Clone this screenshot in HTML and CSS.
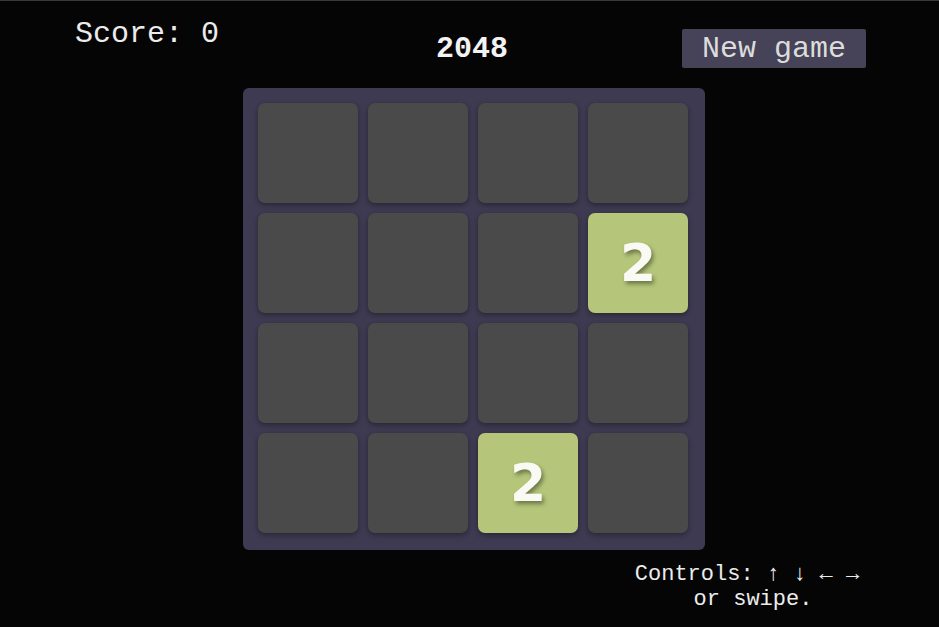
FILE: index.html
```html
<!DOCTYPE html>
<html lang="en">
<head>
<meta charset="utf-8">
<title>2048</title>
<link rel="stylesheet" href="styles.css">
</head>
<body>
<div class="page">
  <header class="header">
    <div class="score">Score: 0</div>
    <h1 class="title">2048</h1>
    <button class="new-game">New game</button>
  </header>
  <main class="board">
    <div class="cell"></div>
    <div class="cell"></div>
    <div class="cell"></div>
    <div class="cell"></div>
    <div class="cell"></div>
    <div class="cell"></div>
    <div class="cell"></div>
    <div class="cell tile-2">2</div>
    <div class="cell"></div>
    <div class="cell"></div>
    <div class="cell"></div>
    <div class="cell"></div>
    <div class="cell"></div>
    <div class="cell"></div>
    <div class="cell tile-2">2</div>
    <div class="cell"></div>
  </main>
  <footer class="controls">Controls: ↑ ↓ ← →<br><span class="swipe">or swipe.</span></footer>
</div>
</body>
</html>
```
FILE: styles.css
```css
html, body {
  margin: 0;
  padding: 0;
  background: #050505;
}
body {
  border-top: 1px solid #3a3a3a;
  height: 626px;
  overflow: hidden;
  font-family: "Courier New", "Nimbus Mono PS", "FreeMono", "Liberation Mono", monospace;
  color: #ececec;
}
.header {
  display: grid;
  grid-template-columns: 1fr auto 1fr;
  align-items: start;
  height: 87px;
  padding: 0 73px 0 75px;
  box-sizing: border-box;
}
.score {
  justify-self: start;
  margin-top: 16px;
  font-size: 30px;
  line-height: 34px;
  color: #ececec;
}
.title {
  margin: 31px 0 0 3px;
  font-size: 30px;
  line-height: 34px;
  font-weight: bold;
  color: #f2f2f2;
}
.new-game {
  justify-self: end;
  margin-top: 28px;
  padding: 3px 20px 2px;
  border: none;
  border-radius: 2px;
  background: #464257;
  color: #dcdcdc;
  font-family: "Courier New", "Nimbus Mono PS", "FreeMono", "Liberation Mono", monospace;
  font-size: 30px;
  line-height: 34px;
}
.board {
  display: grid;
  grid-template-columns: repeat(4, 100px);
  grid-auto-rows: 100px;
  gap: 10px;
  width: 462px;
  height: 462px;
  box-sizing: border-box;
  padding: 15px 17px 17px 15px;
  margin-left: 243px;
  background: #3d3a51;
  border-radius: 6px;
}
.cell {
  background: #4a4a4a;
  border-radius: 7px;
  box-shadow: 0 2px 5px rgba(0, 0, 0, 0.35);
}
.tile-2 {
  display: flex;
  align-items: center;
  justify-content: center;
  background: #b5c67a;
  color: #fafaf5;
  font-family: "DejaVu Sans", Verdana, sans-serif;
  font-weight: bold;
  font-size: 52px;
  text-shadow: 2px 3px 4px rgba(0, 0, 0, 0.4);
}
.controls {
  width: 228px;
  margin: 12px 0 0 633px;
  text-align: center;
  font-size: 22px;
  line-height: 25px;
  color: #ececec;
}
.swipe {
  display: inline-block;
  margin-left: 12px;
}
```
